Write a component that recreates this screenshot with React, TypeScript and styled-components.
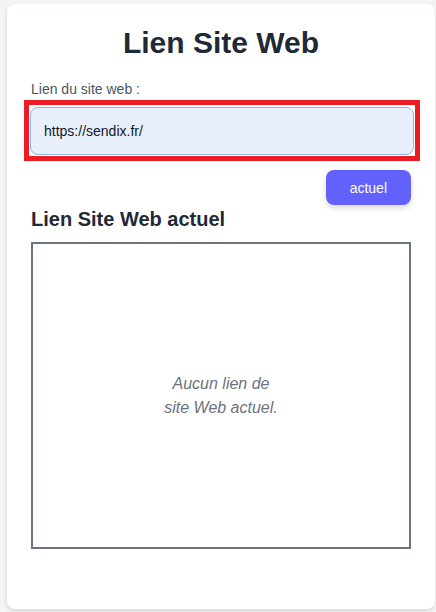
import React, { useState } from 'react';
import styled, { createGlobalStyle } from 'styled-components';

const GlobalStyle = createGlobalStyle`
  * {
    box-sizing: border-box;
  }
  body {
    margin: 0;
    background: #f3f4f6;
    font-family: "Liberation Sans", Arial, sans-serif;
  }
`

const Page = styled.main`
  padding: 4px 1px 3px 7px;
`

const Card = styled.section`
  background: white;
  border-radius: 8px;
  box-shadow: 0 2px 4px rgba(0, 0, 0, 0.12);
  padding: 21px 24px 60px 24px;
`

const Title = styled.h1`
  margin: 0 0 18px 0;
  font-size: 30px;
  line-height: 36px;
  font-weight: 700;
  color: #1f2937;
  text-align: center;
`

const Label = styled.label`
  display: block;
  margin-bottom: 1px;
  font-size: 14px;
  line-height: 20px;
  color: #4b5563;
`

const Highlight = styled.div`
  margin: 0 -9px 0 -7px;
  padding: 2px 1px 1px 1px;
  border: 5px solid #ed1c24;
`

const Input = styled.input`
  display: block;
  width: 100%;
  height: 48px;
  padding: 0 13px;
  font-family: inherit;
  font-size: 14px;
  color: #111827;
  background: #e8f0fe;
  border: 1px solid #8fb4e8;
  border-radius: 8px;
  outline: none;
`

const Actions = styled.div`
  display: flex;
  justify-content: flex-end;
  margin-top: 9px;
`

const Button = styled.button`
  height: 35px;
  padding: 0 24px;
  font-family: inherit;
  font-size: 14px;
  color: white;
  background: #6261fc;
  border: none;
  border-radius: 8px;
  box-shadow: 0 3px 6px rgba(0, 0, 0, 0.15);
  cursor: pointer;
`

const Subtitle = styled.h2`
  margin: 0 0 9px 0;
  font-size: 20px;
  line-height: 28px;
  font-weight: 700;
  color: #1f2937;
`

const Preview = styled.div`
  height: 307px;
  border: 2px solid #6b7280;
  display: flex;
  align-items: center;
  justify-content: center;
`

const Empty = styled.p`
  margin: 0;
  max-width: 120px;
  font-size: 16px;
  line-height: 24px;
  font-style: italic;
  color: #6b7280;
  text-align: center;
`

const App = () => {
    const [url, setUrl] = useState('https://sendix.fr/');
    return (<Page>
        <GlobalStyle/>
        <Card>
            <Title>Lien Site Web</Title>
            <Label htmlFor="site">Lien du site web :</Label>
            <Highlight>
                <Input id="site" value={url} onChange={e => setUrl(e.target.value)}/>
            </Highlight>
            <Actions>
                <Button>actuel</Button>
            </Actions>
            <Subtitle>Lien Site Web actuel</Subtitle>
            <Preview>
                <Empty>Aucun lien de site Web actuel.</Empty>
            </Preview>
        </Card>
    </Page>);
}

export default App;
